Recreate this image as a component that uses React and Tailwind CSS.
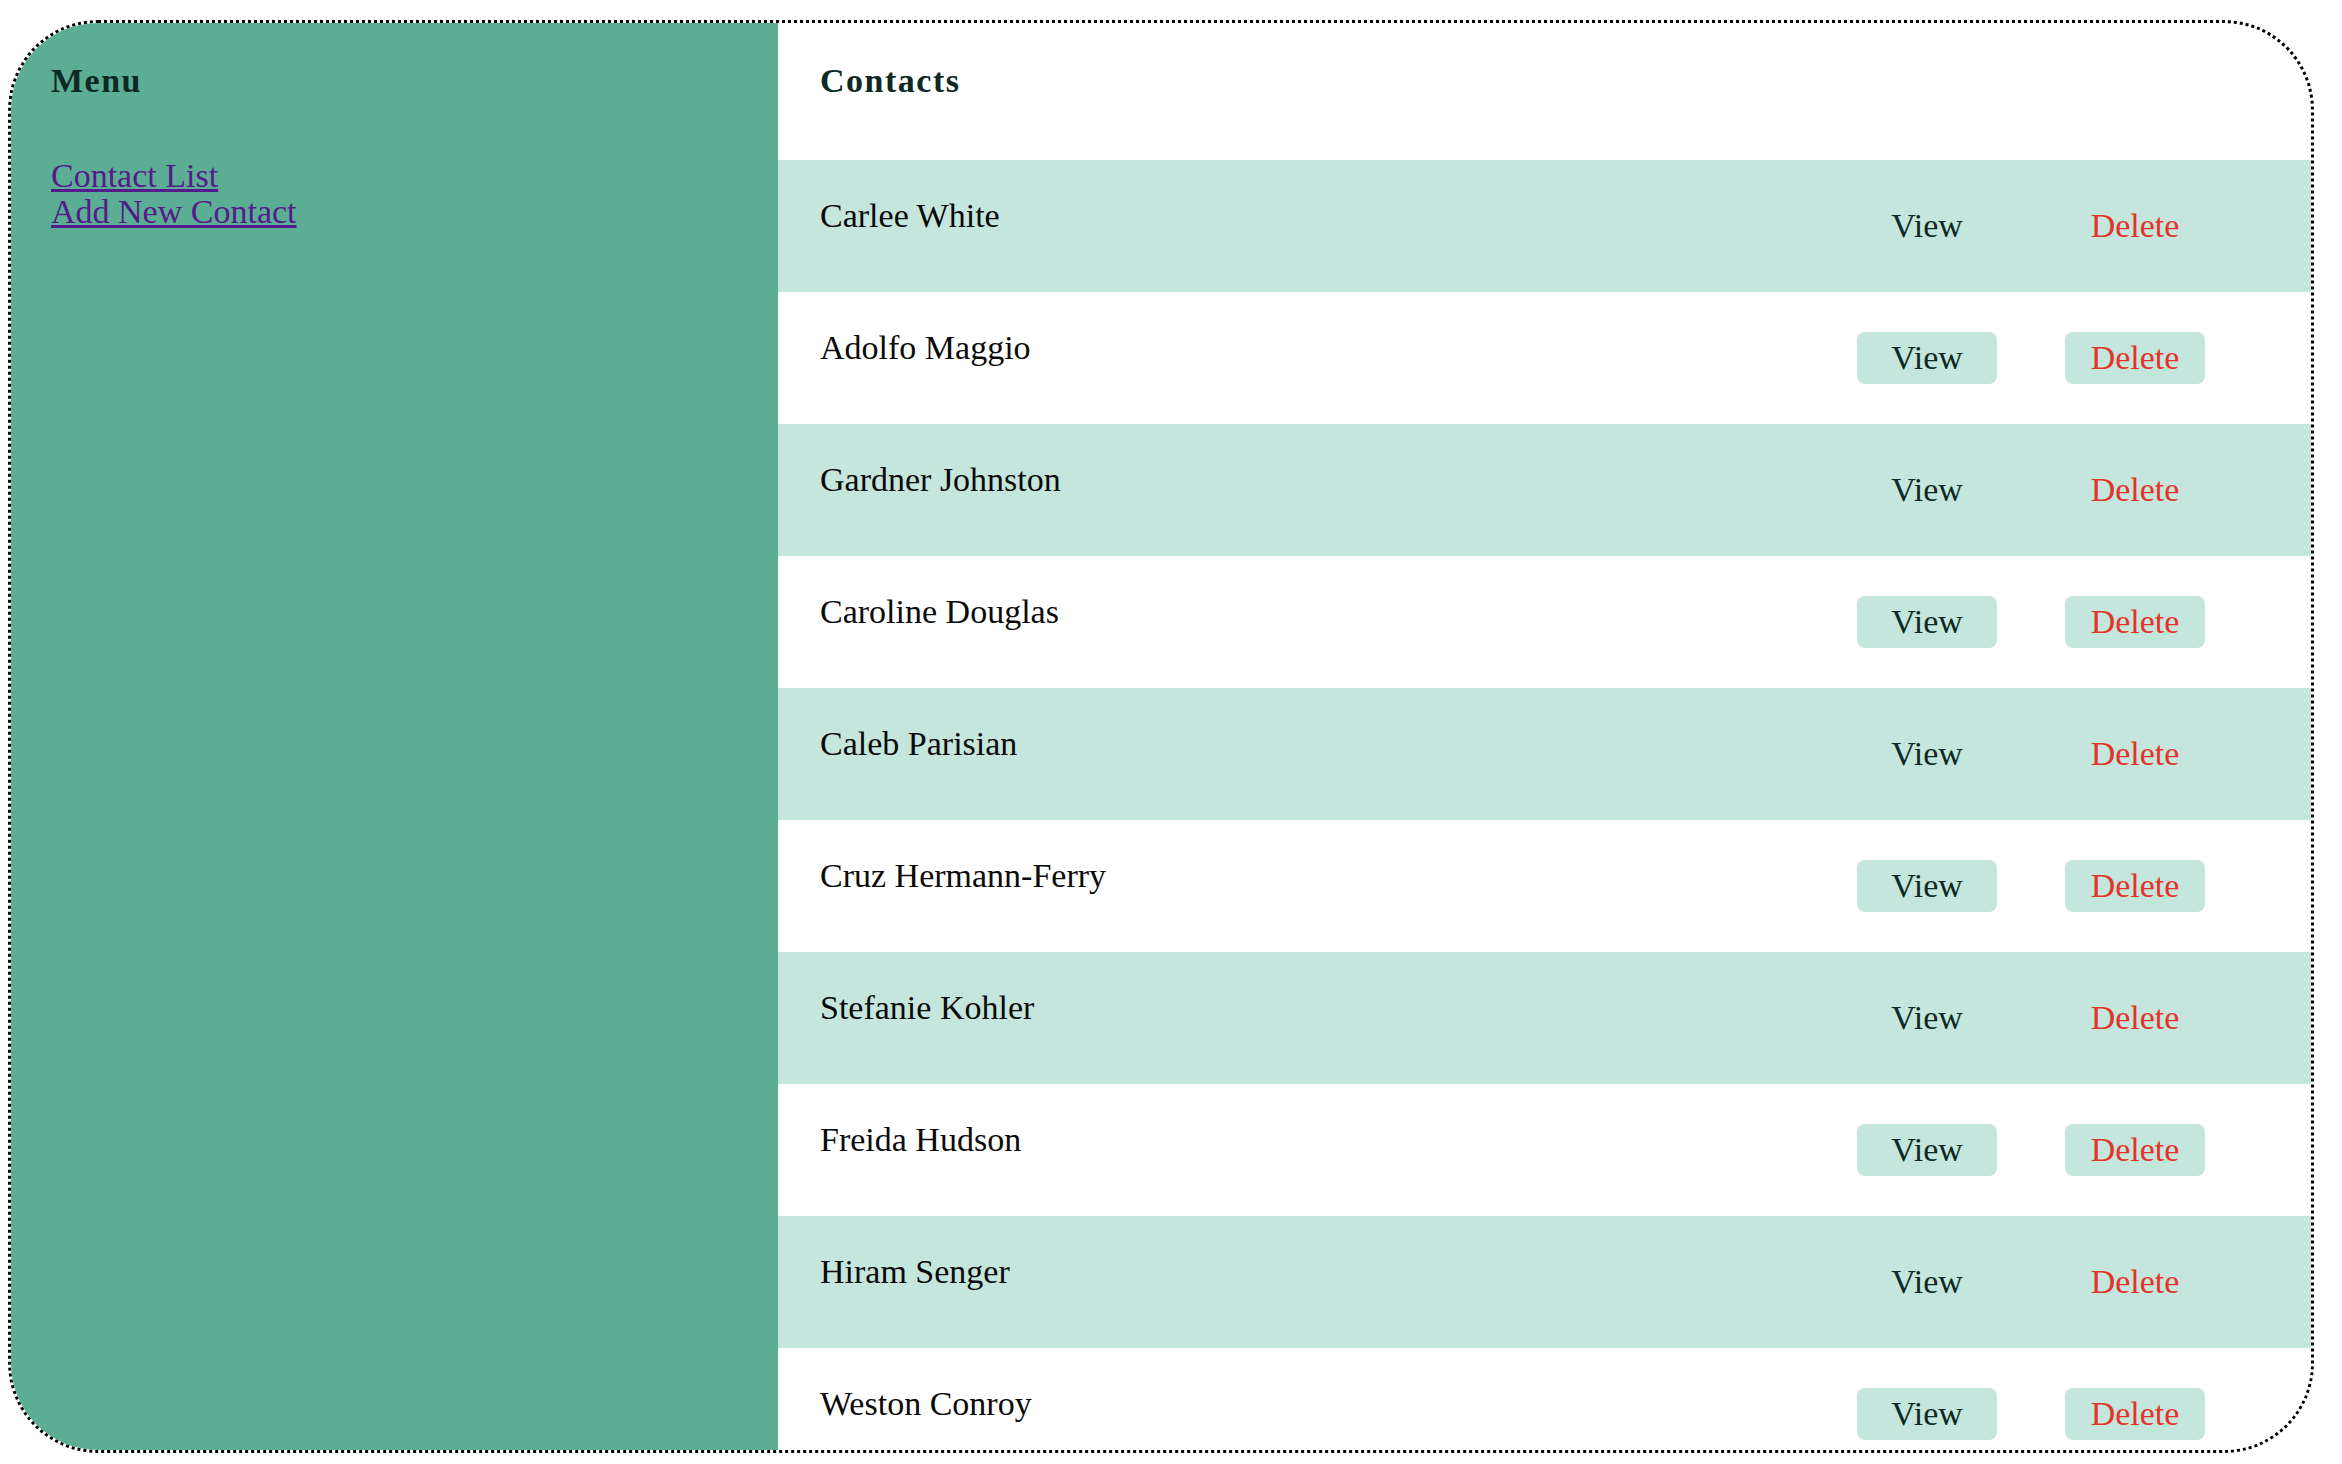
import React from "react";

const contacts = [
  "Carlee White",
  "Adolfo Maggio",
  "Gardner Johnston",
  "Caroline Douglas",
  "Caleb Parisian",
  "Cruz Hermann-Ferry",
  "Stefanie Kohler",
  "Freida Hudson",
  "Hiram Senger",
  "Weston Conroy",
];

export default function App() {
  return (
    <div
      className="min-h-screen bg-white pt-[20px] pl-[8px]"
      style={{ fontFamily: '"Liberation Serif", "Times New Roman", serif' }}
    >
      <div className="flex w-[2306px] h-[1433px] border-[3px] border-dotted border-black rounded-[90px] overflow-hidden bg-white">
        <aside className="w-[767px] shrink-0 bg-[#5bae94] pl-[40px] pt-[40px]">
          <h2 className="text-[34px] leading-[36px] font-bold tracking-[1.5px] text-[#0c2a23]">Menu</h2>
          <nav className="mt-[59px] flex flex-col text-[34px] leading-[36px]">
            <a href="#" className="text-[#551a8b] underline self-start">
              Contact List
            </a>
            <a href="#" className="text-[#551a8b] underline self-start">
              Add New Contact
            </a>
          </nav>
        </aside>
        <main className="flex-1 flex flex-col">
          <div className="h-[137px] shrink-0 pl-[42px] pt-[40px]">
            <h1 className="text-[34px] leading-[36px] font-bold tracking-[1.5px] text-[#0c2a23]">Contacts</h1>
          </div>
          {contacts.map((name, i) => (
            <div
              key={name}
              className={
                "h-[132px] shrink-0 flex items-start pt-[38px] pl-[42px] pr-[106px] " +
                (i % 2 === 0 ? "bg-[#c4e6dc]" : "bg-white")
              }
            >
              <div className="flex-1 text-[34px] leading-[36px] text-[#0a0a0a]">{name}</div>
              <div className="mt-[2px] flex gap-[68px]">
                <button className="w-[140px] h-[52px] rounded-[8px] bg-[#c4e6dc] text-[34px] leading-[36px] text-[#0f2a24] flex items-center justify-center">
                  View
                </button>
                <button className="w-[140px] h-[52px] rounded-[8px] bg-[#c4e6dc] text-[34px] leading-[36px] text-[#e5332a] flex items-center justify-center">
                  Delete
                </button>
              </div>
            </div>
          ))}
        </main>
      </div>
    </div>
  );
}
